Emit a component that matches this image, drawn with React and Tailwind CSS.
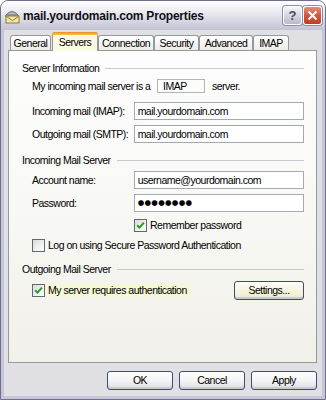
import React from "react";

const F = "font-['Liberation_Sans',Arial,sans-serif]";

function Check({ checked }) {
  return (
    <span className="w-[13px] h-[13px] border border-[#5d6878] bg-gradient-to-br from-[#dcdcd5] to-white flex items-center justify-center shrink-0">
      {checked && (
        <svg width="9" height="9" viewBox="0 0 9 9">
          <path d="M1.2 4.2 L3.5 6.6 L7.9 1.6" stroke="#21a121" strokeWidth="2" fill="none" />
        </svg>
      )}
    </span>
  );
}

function Btn({ children, w, hot }) {
  return (
    <div
      className={
        "h-[19px] rounded-[3px] border border-[#3d4d70] flex items-center justify-center text-black shadow-[inset_0_-2px_0_#c9c8d4] " +
        w +
        " " +
        (hot
          ? "bg-gradient-to-b from-[#fffff4] to-[#ecebcc]"
          : "bg-gradient-to-b from-white via-[#f4f4f6] to-[#dedde6]")
      }
    >
      {children}
    </div>
  );
}

function Group({ title }) {
  return (
    <div className="flex items-center h-[14px]">
      <span>{title}</span>
      <div className="flex-1 h-px bg-[#c9c9cf] ml-[6px]" />
    </div>
  );
}

function Input({ children }) {
  return (
    <div className="w-[171px] h-[18px] border border-[#a3aab3] bg-white flex items-center pl-[3px]">
      {children}
    </div>
  );
}

function Tab({ label, w, sel }) {
  if (sel)
    return (
      <div
        className={
          "h-[19px] -mb-px relative z-10 border-x border-[#919b9c] rounded-t-[3px] bg-[#fafae2] flex flex-col " + w
        }
      >
        <div className="h-[3px] rounded-t-[3px] bg-gradient-to-b from-[#e68b2c] to-[#ffc73c] -mx-px" />
        <div className="flex-1 flex items-center justify-center pb-[2px]">{label}</div>
      </div>
    );
  return (
    <div
      className={
        "h-[15px] border-x border-t border-[#919b9c] rounded-t-[3px] bg-gradient-to-b from-white to-[#ecebe6] flex items-center justify-center " +
        w
      }
    >
      {label}
    </div>
  );
}

export default function App() {
  return (
    <div className={"w-[326px] h-[400px] bg-white whitespace-nowrap " + F}>
      <div className="w-[326px] h-[400px] border border-[#6e6e8e] rounded-t-[8px] bg-[#c6c6d6] flex flex-col overflow-hidden text-[10.5px] tracking-[-0.5px] text-black leading-none">
        {/* Title bar */}
        <div className="h-[29px] shrink-0 flex items-center pl-[2px] pr-[2px] bg-gradient-to-b from-white via-[#e4e4ec] to-[#c2c2d2]">
          <svg width="18" height="16" viewBox="0 0 18 16" className="shrink-0">
            <path d="M3 7 Q9 0 15 7 Z" fill="#b8bcc4" stroke="#6a6e78" strokeWidth="1" />
            <rect x="2" y="7" width="14" height="2" fill="#8e939c" />
            <rect x="3" y="8" width="13" height="7" fill="#f3e7a8" stroke="#8c7a3c" strokeWidth="1" />
            <path d="M3.5 8.5 L9.5 12.5 L15.5 8.5" stroke="#8c7a3c" strokeWidth="1" fill="none" />
          </svg>
          <span className="ml-[2px] font-bold text-[12px] tracking-[-0.2px] text-[#101018]">
            mail.yourdomain.com Properties
          </span>
          <div className="ml-auto flex gap-[1px] mr-[1px]">
            <div className="w-[19px] h-[19px] rounded-[3px] border border-white bg-gradient-to-b from-[#f4f4f8] to-[#b9b9cc] shadow-[0_0_0_1px_#8c8ca4] flex items-center justify-center">
              <span className="font-bold text-[13px] text-[#4a4a5a] tracking-normal">?</span>
            </div>
            <div className="w-[19px] h-[19px] rounded-[3px] border border-white bg-gradient-to-b from-[#e88b78] via-[#d4553d] to-[#c03c26] shadow-[0_0_0_1px_#8c8ca4] flex items-center justify-center">
              <svg width="11" height="11" viewBox="0 0 11 11">
                <path d="M1.5 1.5 L9.5 9.5 M9.5 1.5 L1.5 9.5" stroke="white" strokeWidth="2" />
              </svg>
            </div>
          </div>
        </div>

        {/* Body */}
        <div className="flex-1 mx-[3px] mb-[3px] bg-[#e0dfe3] flex flex-col pt-[2px] pl-[4px] pr-[5px]">
          {/* Tabs */}
          <div className="h-[18px] flex items-end">
            <div className="ml-[2px]" />
            <Tab label="General" w="w-[41px]" />
            <div className="w-px" />
            <Tab label="Servers" w="w-[46px]" sel />
            <Tab label="Connection" w="w-[56px]" />
            <Tab label="Security" w="w-[45px]" />
            <Tab label="Advanced" w="w-[54px]" />
            <Tab label="IMAP" w="w-[36px]" />
          </div>

          {/* Panel */}
          <div className="h-[313px] border border-[#919b9c] bg-gradient-to-b from-[#fdfdfd] via-[#f8f8f5] to-[#f1f0e9] flex flex-col pl-[13px] pr-[12px]">
            <div className="mt-[10px]">
              <Group title="Server Information" />
            </div>
            <div className="ml-[10px] mt-[4px] h-[14px] flex items-center">
              <span className="w-[125px]">My incoming mail server is a</span>
              <div className="w-[48px] h-[14px] border border-[#b3b3b8] flex items-center pl-[5px]">IMAP</div>
              <span className="ml-[7px]">server.</span>
            </div>
            <div className="ml-[10px] mt-[9px] flex items-center">
              <span className="w-[102px]">Incoming mail (IMAP):</span>
              <Input>mail.yourdomain.com</Input>
            </div>
            <div className="ml-[10px] mt-[5px] flex items-center">
              <span className="w-[102px]">Outgoing mail (SMTP):</span>
              <Input>mail.yourdomain.com</Input>
            </div>

            <div className="mt-[10px]">
              <Group title="Incoming Mail Server" />
            </div>
            <div className="ml-[10px] mt-[4px] flex items-center">
              <span className="w-[102px]">Account name:</span>
              <Input>username@yourdomain.com</Input>
            </div>
            <div className="ml-[10px] mt-[5px] flex items-center">
              <span className="w-[102px]">Password:</span>
              <Input>
                <span className="font-['DejaVu_Sans',sans-serif] text-[7.5px] tracking-[0.3px]">●●●●●●●●</span>
              </Input>
            </div>
            <div className="ml-[112px] mt-[7px] flex items-center gap-[3px] h-[13px]">
              <Check checked />
              <span>Remember password</span>
            </div>
            <div className="ml-[10px] mt-[7px] flex items-center gap-[3px] h-[13px]">
              <Check />
              <span>Log on using Secure Password Authentication</span>
            </div>

            <div className="mt-[10px]">
              <Group title="Outgoing Mail Server" />
            </div>
            <div className="ml-[10px] mt-[5px] h-[18px] flex items-center">
              <div className="h-[13px] bg-[#f7f7d6] flex items-center gap-[3px] pr-[3px]">
                <Check checked />
                <span>My server requires authentication</span>
              </div>
              <div className="ml-auto">
                <Btn w="w-[70px]" hot>
                  Settings...
                </Btn>
              </div>
            </div>
          </div>

          {/* Buttons */}
          <div className="mt-[8px] flex justify-end gap-[6px] pr-0">
            <Btn w="w-[66px]">OK</Btn>
            <Btn w="w-[66px]">Cancel</Btn>
            <Btn w="w-[66px]">Apply</Btn>
          </div>
        </div>
      </div>
    </div>
  );
}
